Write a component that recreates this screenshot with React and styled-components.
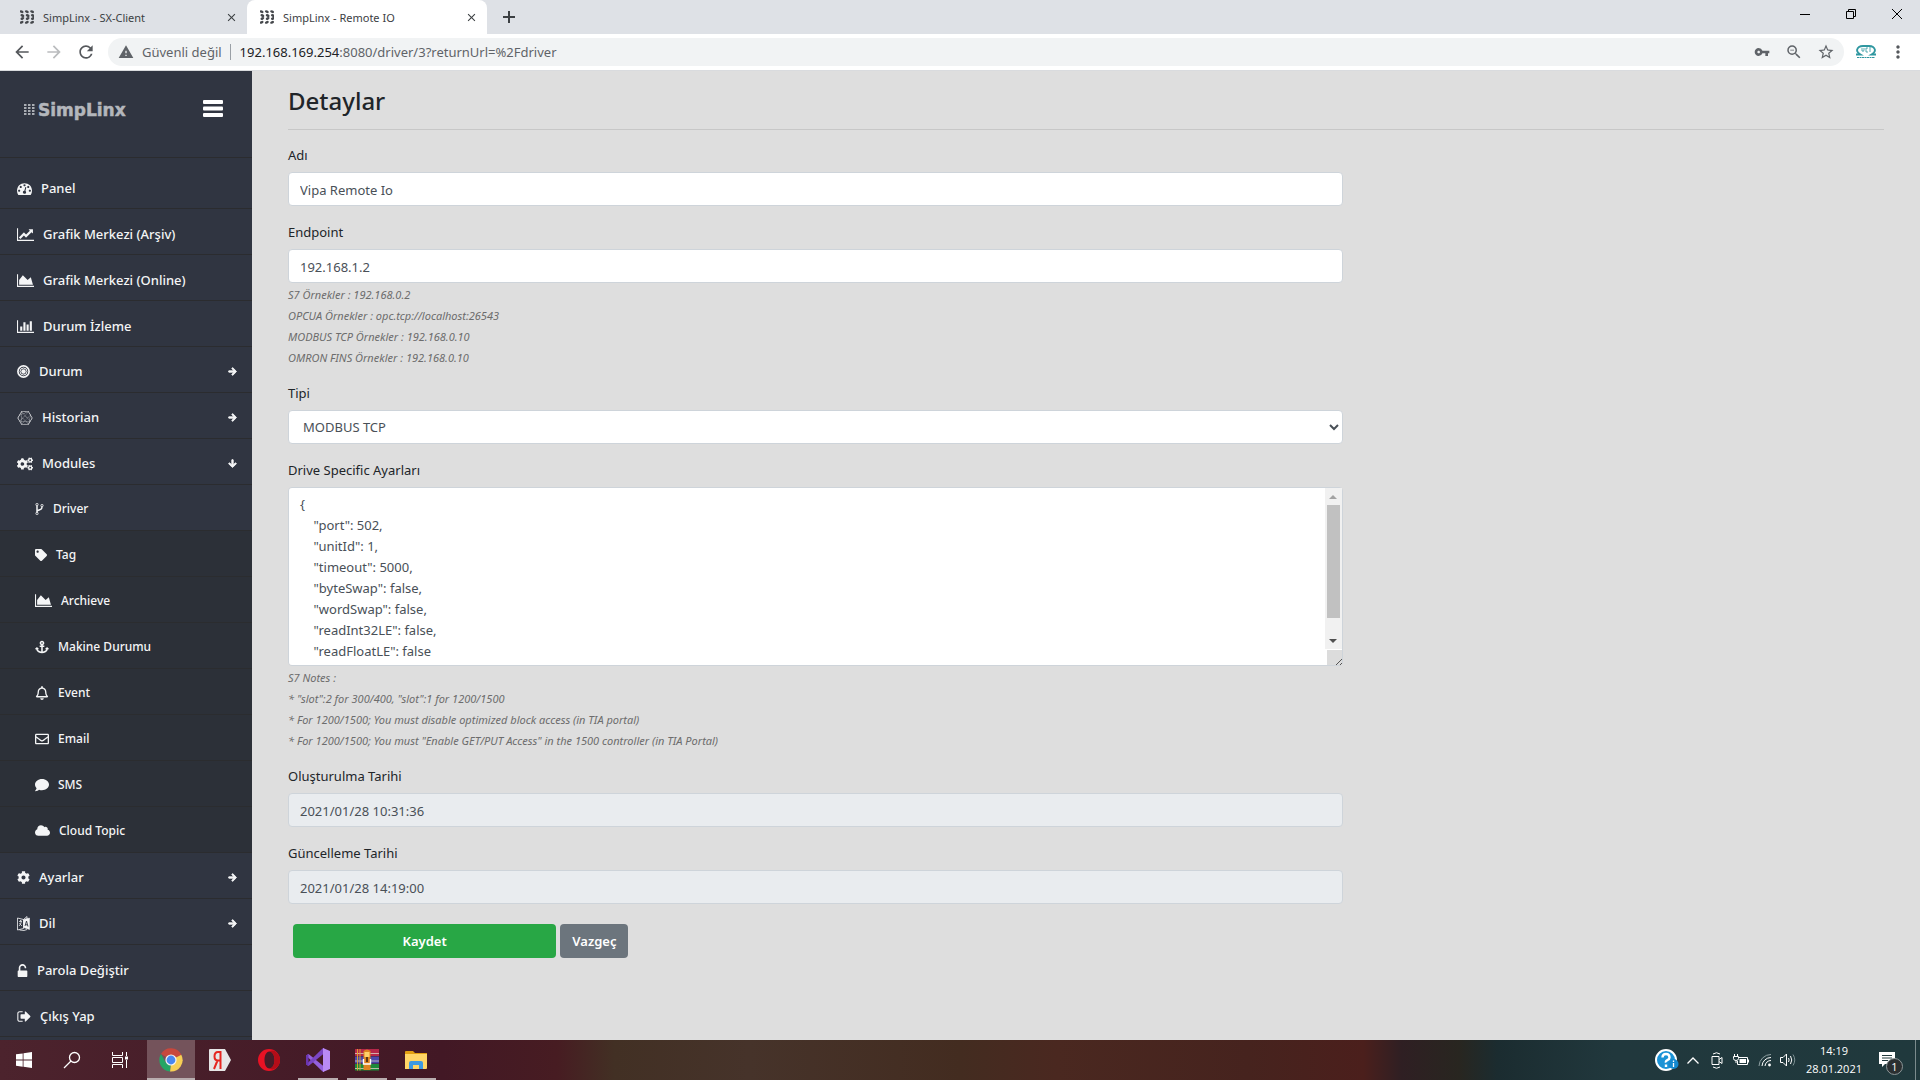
import React, { useState } from 'react'
import styled, { createGlobalStyle, css } from 'styled-components'
import {
  FaAnchor,
  FaArrowDown,
  FaArrowRight,
  FaCloud,
  FaCog,
  FaCogs,
  FaComment,
  FaConnectdevelop,
  FaRegBell,
  FaRegEnvelope,
  FaTag,
} from 'react-icons/fa'
import {
  MdArrowBack,
  MdArrowForward,
  MdClose,
  MdMoreVert,
  MdRefresh,
  MdStarBorder,
  MdVpnKey,
  MdWarning,
  MdZoomOut,
} from 'react-icons/md'

const GaugeIcon = () => (
  <svg width="15" height="15" viewBox="0 0 1792 1792" fill="currentColor">
    <path d="M384 1152q0-53-37.5-90.5t-90.5-37.5-90.5 37.5-37.5 90.5 37.5 90.5 90.5 37.5 90.5-37.5 37.5-90.5zm192-448q0-53-37.5-90.5t-90.5-37.5-90.5 37.5-37.5 90.5 37.5 90.5 90.5 37.5 90.5-37.5 37.5-90.5zm428 481l101-382q6-26-7.5-48.5t-38.5-29.5-48 6.5-30 39.5l-101 382q-60 5-107 43.5t-63 98.5q-20 77 20 146t117 89 146-20 89-117q16-60-6-117t-72-91zm660-33q0-53-37.5-90.5t-90.5-37.5-90.5 37.5-37.5 90.5 37.5 90.5 90.5 37.5 90.5-37.5 37.5-90.5zm-640-640q0-53-37.5-90.5t-90.5-37.5-90.5 37.5-37.5 90.5 37.5 90.5 90.5 37.5 90.5-37.5 37.5-90.5zm448 192q0-53-37.5-90.5t-90.5-37.5-90.5 37.5-37.5 90.5 37.5 90.5 90.5 37.5 90.5-37.5 37.5-90.5zm320 448q0 261-141 483-19 29-54 29h-1402q-35 0-54-29-141-221-141-483 0-182 71-348t191-286 286-191 348-71 348 71 286 191 191 286 71 348z" />
  </svg>
)

const ChartSvg = ({ d }) => (
  <svg width="17" height="15" viewBox="0 0 2048 1792" fill="currentColor">
    <path d={d} />
  </svg>
)

const LineChartIcon = () => (
  <ChartSvg d="M2048 1536v128h-2048v-1536h128v1408h1920zm-128-1248v435q0 21-19.5 29.5t-35.5-7.5l-121-121-633 633q-10 10-23 10t-23-10l-233-233-416 416-192-192 585-585q10-10 23-10t23 10l233 233 464-464-121-121q-16-16-7.5-35.5t29.5-19.5h435q14 0 23 9t9 23z" />
)

const AreaChartIcon = () => (
  <ChartSvg d="M2048 1536v128h-2048v-1536h128v1408h1920zm-384-1024l256 896h-1664v-576l448-576 576 576z" />
)

const BarChartIcon = () => (
  <ChartSvg d="M640 896v512h-256v-512h256zm384-512v1024h-256v-1024h256zm1024 1152v128h-2048v-1536h128v1408h1920zm-640-896v768h-256v-768h256zm384-384v1152h-256v-1152h256z" />
)

const BullseyeIcon = () => (
  <svg width="13" height="15" viewBox="0 0 26 30" fill="none" stroke="currentColor">
    <circle cx="13" cy="15" r="4.5" fill="currentColor" stroke="none" />
    <circle cx="13" cy="15" r="7" strokeWidth="2" />
    <circle cx="13" cy="15" r="11.2" strokeWidth="3.4" />
  </svg>
)

const ForkIcon = () => (
  <svg width="9" height="14" viewBox="384 0 1024 1792" fill="currentColor">
    <path d="M672 1472q0-40-28-68t-68-28-68 28-28 68 28 68 68 28 68-28 28-68zm0-1152q0-40-28-68t-68-28-68 28-28 68 28 68 68 28 68-28 28-68zm640 128q0-40-28-68t-68-28-68 28-28 68 28 68 68 28 68-28 28-68zm96 0q0 52-26 96.5t-70 69.5q-2 287-226 414-67 38-203 81-128 40-169.5 71t-41.5 100v26q44 25 70 69.5t26 96.5q0 80-56 136t-136 56-136-56-56-136q0-52 26-96.5t70-69.5v-820q-44-25-70-69.5t-26-96.5q0-80 56-136t136-56 136 56 56 136q0 52-26 96.5t-70 69.5v497q54-26 154-57 55-17 87.5-29.5t70.5-31 59-39.5 40.5-51 28-69.5 8.5-91.5q-44-25-70-69.5t-26-96.5q0-80 56-136t136-56 136 56 56 136z" />
  </svg>
)

const LanguageIcon = () => (
  <svg width="13" height="15" viewBox="0 0 26 30" fill="none" stroke="currentColor">
    <path d="M1 4 13 7V25L1 28zM13 7 20 1V6M5 28 14 29 20 27" strokeWidth="1.6" />
    <path d="M13 7 25 4V27L13 23z" fill="currentColor" />
    <path d="M4 11 10 10M7 8V11M9 10Q8 17 4 20M5 14Q7 18 10 20" strokeWidth="1.5" />
    <path d="M16 20 19 10 22 21M17 17 21 18" stroke="#303541" strokeWidth="1.8" />
  </svg>
)

const UnlockIcon = () => (
  <svg width="11" height="15" viewBox="0 0 1152 1792" fill="currentColor">
    <path d="M1056 896q40 0 68 28t28 68v576q0 40-28 68t-68 28h-960q-40 0-68-28t-28-68v-576q0-40 28-68t68-28h32v-320q0-185 131.5-316.5t316.5-131.5 316.5 131.5 131.5 316.5q0 26-19 45t-45 19h-64q-26 0-45-19t-19-45q0-106-75-181t-181-75-181 75-75 181v320h736z" />
  </svg>
)

const SignOutIcon = () => (
  <svg width="14" height="15" viewBox="0 0 1600 1792" fill="currentColor">
    <path d="M640 1440q0 4 1 20t.5 26.5-3 23.5-10 19.5-20.5 6.5h-320q-119 0-203.5-84.5t-84.5-203.5v-704q0-119 84.5-203.5t203.5-84.5h320q13 0 22.5 9.5t9.5 22.5q0 4 1 20t.5 26.5-3 23.5-10 19.5-20.5 6.5h-320q-66 0-113 47t-47 113v704q0 66 47 113t113 47h312l11.5 1 11.5 3 8 5.5 7 9 2 13.5zm928-544q0 26-19 45l-544 544q-19 19-45 19t-45-19-19-45v-288h-448q-26 0-45-19t-19-45v-384q0-26 19-45t45-19h448v-288q0-26 19-45t45-19 45 19l544 544q19 19 19 45z" />
  </svg>
)

// the columns of chevrons that the brand uses as its mark
const DotMark = ({ size, color }) => (
  <svg width={size} height={size} viewBox="0 0 16 16" fill={color}>
    {[0, 4, 8, 12].map((y, row) =>
      [0, 6, 12].map((x) => (
        <ellipse
          key={`${x}-${y}`}
          cx={x + 2 + (row === 1 || row === 2 ? 0.8 : -0.2)}
          cy={y + 2}
          rx="2.3"
          ry="1.5"
          transform={`rotate(${row < 2 ? 25 : -25} ${x + 2} ${y + 2})`}
        />
      )),
    )}
  </svg>
)

const BrandLogo = () => (
  <svg width="106" height="22" viewBox="0 0 106 22" aria-label="SimpLinx">
    <g fill="#a9adb3">
      {[1, 5, 9].map((x) =>
        [4, 7, 10, 13].map((y) => (
          <path key={`${x}-${y}`} d={`M${x} ${y}l2 0 1 1-1 1-2 0z`} />
        )),
      )}
    </g>
    <text
      x="15"
      y="16"
      fill="#b4b7bc"
      stroke="#b4b7bc"
      strokeWidth="0.5"
      fontFamily="DejaVu Sans, sans-serif"
      fontWeight="700"
      fontSize="17"
    >
      SimpLinx
    </text>
  </svg>
)

const mainItems = [
  { label: 'Panel', icon: <GaugeIcon /> },
  { label: 'Grafik Merkezi (Arşiv)', icon: <LineChartIcon /> },
  { label: 'Grafik Merkezi (Online)', icon: <AreaChartIcon /> },
  { label: 'Durum İzleme', icon: <BarChartIcon /> },
  { label: 'Durum', icon: <BullseyeIcon />, arrow: 'right' },
  { label: 'Historian', icon: <FaConnectdevelop size={16} />, arrow: 'right' },
  { label: 'Modules', icon: <FaCogs size={16} />, arrow: 'down' },
]

const moduleItems = [
  { label: 'Driver', icon: <ForkIcon />, active: true },
  { label: 'Tag', icon: <FaTag size={12} /> },
  { label: 'Archieve', icon: <AreaChartIcon /> },
  { label: 'Makine Durumu', icon: <FaAnchor size={14} /> },
  { label: 'Event', icon: <FaRegBell size={14} /> },
  { label: 'Email', icon: <FaRegEnvelope size={14} /> },
  { label: 'SMS', icon: <FaComment size={14} /> },
  { label: 'Cloud Topic', icon: <FaCloud size={15} /> },
]

const bottomItems = [
  { label: 'Ayarlar', icon: <FaCog size={13} />, arrow: 'right' },
  { label: 'Dil', icon: <LanguageIcon />, arrow: 'right' },
  { label: 'Parola Değiştir', icon: <UnlockIcon /> },
  { label: 'Çıkış Yap', icon: <SignOutIcon /> },
]

const driverSettings = `{
    "port": 502,
    "unitId": 1,
    "timeout": 5000,
    "byteSwap": false,
    "wordSwap": false,
    "readInt32LE": false,
    "readFloatLE": false
}`

const Browser = () => (
  <header>
    <TabStrip>
      <Tab>
        <DotMark size={14} color="#45484c" />
        <TabTitle>SimpLinx - SX-Client</TabTitle>
        <TabClose aria-label="Close tab">
          <MdClose size={13} />
        </TabClose>
      </Tab>
      <Tab $active>
        <DotMark size={14} color="#45484c" />
        <TabTitle>SimpLinx - Remote IO</TabTitle>
        <TabClose aria-label="Close tab">
          <MdClose size={13} />
        </TabClose>
      </Tab>
      <NewTab aria-label="New tab">
        <svg width="14" height="14" viewBox="0 0 14 14" stroke="#3c4043" strokeWidth="2">
          <path d="M7 1v12M1 7h12" />
        </svg>
      </NewTab>
      <WindowButtons>
        <WindowButton aria-label="Minimize">
          <svg width="10" height="10" stroke="#000">
            <path d="M0 5.5h10" />
          </svg>
        </WindowButton>
        <WindowButton aria-label="Restore">
          <svg width="10" height="10" stroke="#000" fill="none">
            <path d="M.5 2.5h7v7h-7zM2.5 2.5v-2h7v7h-2" />
          </svg>
        </WindowButton>
        <WindowButton aria-label="Close">
          <svg width="10" height="10" stroke="#000">
            <path d="M0 0l10 10M10 0l-10 10" />
          </svg>
        </WindowButton>
      </WindowButtons>
    </TabStrip>
    <Toolbar>
      <ToolButton aria-label="Back">
        <MdArrowBack size={20} />
      </ToolButton>
      <ToolButton aria-label="Forward" disabled>
        <MdArrowForward size={20} />
      </ToolButton>
      <ToolButton aria-label="Reload">
        <MdRefresh size={20} />
      </ToolButton>
      <AddressBar>
        <MdWarning size={16} />
        <Security>Güvenli değil</Security>
        <Url>
          <b>192.168.169.254</b>:8080/driver/3?returnUrl=%2Fdriver
        </Url>
        <AddressButton aria-label="Passwords">
          <MdVpnKey size={16} />
        </AddressButton>
        <AddressButton aria-label="Zoom">
          <MdZoomOut size={18} />
        </AddressButton>
        <AddressButton aria-label="Bookmark">
          <MdStarBorder size={18} />
        </AddressButton>
      </AddressBar>
      <Extension aria-label="Extension">
        <svg width="22" height="14" viewBox="0 0 22 14" fill="none" stroke="#2f97a0">
          <path
            d="M1 9.5h4.5Q2 7.5 2 5Q3 1 8 1H14Q19 1 20 5Q20 7.5 16.5 9.5H21"
            strokeWidth="1.8"
          />
          <path d="M7 3v3q2 1 2-1V3M13 3h-2v4h2M15 2v5" strokeWidth="0.8" />
          <path d="M2 12.5h18" strokeDasharray="2 0.5" />
        </svg>
      </Extension>
      <ToolButton aria-label="Menu">
        <MdMoreVert size={20} />
      </ToolButton>
    </Toolbar>
  </header>
)

const MenuItem = ({ item, sub, first }) => (
  <MenuRow $sub={sub} $active={item.active} $first={first}>
    <MenuLink href="#" $sub={sub} $group={item.arrow}>
      {item.icon}
      <MenuLabel>{item.label}</MenuLabel>
      {item.arrow === 'right' && <FaArrowRight size={9} strokeWidth={50} />}
      {item.arrow === 'down' && <FaArrowDown size={9} strokeWidth={50} />}
    </MenuLink>
  </MenuRow>
)

const SideMenu = () => (
  <Sidebar>
    <SidebarHeader>
      <BrandLogo />
      <MenuToggle aria-label="Menu">
        <svg width="20" height="17" viewBox="0 0 20 17" fill="#fff">
          <rect width="20" height="4" rx="1" />
          <rect y="6.5" width="20" height="4" rx="1" />
          <rect y="13" width="20" height="4" rx="1" />
        </svg>
      </MenuToggle>
    </SidebarHeader>
    <Menu>
      {mainItems.map((item, i) => (
        <MenuItem key={item.label} item={item} first={i === 0} />
      ))}
      {moduleItems.map((item) => (
        <MenuItem key={item.label} item={item} sub />
      ))}
      {bottomItems.map((item) => (
        <MenuItem key={item.label} item={item} />
      ))}
    </Menu>
  </Sidebar>
)

const DriverForm = () => {
  const [name, setName] = useState('Vipa Remote Io')
  const [endpoint, setEndpoint] = useState('192.168.1.2')
  const [type, setType] = useState('MODBUS TCP')
  const [settings, setSettings] = useState(driverSettings)

  return (
    <Form onSubmit={(e) => e.preventDefault()}>
      <Group>
        <Label htmlFor="name">Adı</Label>
        <Input id="name" value={name} onChange={(e) => setName(e.target.value)} />
      </Group>
      <Group $withHelp>
        <Label htmlFor="endpoint">Endpoint</Label>
        <Input
          id="endpoint"
          value={endpoint}
          onChange={(e) => setEndpoint(e.target.value)}
        />
        <Help>
          <li>S7 Örnekler : 192.168.0.2</li>
          <li>OPCUA Örnekler : opc.tcp://localhost:26543</li>
          <li>MODBUS TCP Örnekler : 192.168.0.10</li>
          <li>OMRON FINS Örnekler : 192.168.0.10</li>
        </Help>
      </Group>
      <Group>
        <Label htmlFor="type">Tipi</Label>
        <Select id="type" value={type} onChange={(e) => setType(e.target.value)}>
          <option>MODBUS TCP</option>
        </Select>
      </Group>
      <Group $withHelp>
        <Label htmlFor="settings">Drive Specific Ayarları</Label>
        <TextAreaFrame>
          <TextArea
            id="settings"
            value={settings}
            spellCheck={false}
            onChange={(e) => setSettings(e.target.value)}
          />
          <ScrollBar>
            <ScrollArrow>
              <svg width="8" height="4" fill="#a3a3a3">
                <path d="M4 0l4 4H0z" />
              </svg>
            </ScrollArrow>
            <ScrollTrack>
              <ScrollThumb />
            </ScrollTrack>
            <ScrollArrow>
              <svg width="8" height="4" fill="#505050">
                <path d="M0 0h8l-4 4z" />
              </svg>
            </ScrollArrow>
          </ScrollBar>
        </TextAreaFrame>
        <Help>
          <li>S7 Notes :</li>
          <li>* "slot":2 for 300/400, "slot":1 for 1200/1500</li>
          <li>* For 1200/1500; You must disable optimized block access (in TIA portal)</li>
          <li>
            * For 1200/1500; You must "Enable GET/PUT Access" in the 1500 controller (in TIA
            Portal)
          </li>
        </Help>
      </Group>
      <Group>
        <Label htmlFor="created">Oluşturulma Tarihi</Label>
        <Input id="created" value="2021/01/28 10:31:36" readOnly />
      </Group>
      <Group>
        <Label htmlFor="updated">Güncelleme Tarihi</Label>
        <Input id="updated" value="2021/01/28 14:19:00" readOnly />
      </Group>
      <Actions>
        <SaveButton type="submit">Kaydet</SaveButton>
        <CancelButton type="button">Vazgeç</CancelButton>
      </Actions>
    </Form>
  )
}

const WindowsIcon = () => (
  <svg width="16" height="16" viewBox="0 0 16 16" fill="#fff">
    <path d="M0 2.3 6.7 1.4V7.6H0zM7.5 1.3 16 0V7.6H7.5zM0 8.4H6.7V14.7L0 13.7zM7.5 8.4H16V16L7.5 14.8z" />
  </svg>
)

const SearchIcon = () => (
  <svg width="18" height="18" viewBox="0 0 18 18" fill="none" stroke="#fff" strokeWidth="1.3">
    <circle cx="11.5" cy="6.5" r="5" />
    <path d="M8 10 1 17" />
  </svg>
)

const TaskViewIcon = () => (
  <svg width="18" height="16" viewBox="0 0 18 16" fill="none" stroke="#fff">
    <path d="M1.5 0v3.5h10V0M1.5 16v-3.5h10V16M1.5 5.5h10v5h-10zM15.5 0v4M15.5 8v8" />
    <path d="M14 4.5h3v3h-3z" fill="#fff" stroke="none" />
  </svg>
)

const ChromeIcon = () => (
  <svg width="24" height="24" viewBox="0 0 24 24">
    <path d="M12 12 2 6A11.5 11.5 0 0 1 22.3 6.8z" fill="#c8483d" />
    <path d="M12 12H12L22.3 6.8A11.5 11.5 0 0 1 11 23.5z" fill="#f7cf55" />
    <path d="M12 12 11 23.5A11.5 11.5 0 0 1 2 6L7 15z" fill="#25a565" />
    <circle cx="12" cy="12" r="5.6" fill="#f3f3f3" />
    <circle cx="12" cy="12" r="4.4" fill="#4a87f0" />
  </svg>
)

const YandexIcon = () => (
  <svg width="24" height="24" viewBox="0 0 24 24">
    <path d="M2 1H17L23 12 17 23H2Q1 23 1 22V2Q1 1 2 1z" fill="#e6e6e6" />
    <path
      d="M12.5 21V4H10Q6.5 4 6.5 8.5Q6.5 12.5 10 12.5H12.5M9.5 12.5 6 21"
      fill="none"
      stroke="#e52620"
      strokeWidth="2"
    />
  </svg>
)

const OperaIcon = () => (
  <svg width="24" height="24" viewBox="0 0 24 24">
    <path
      d="M12 1A11 11 0 0 0 12 23A11 11 0 0 0 12 1zM12.5 3.5C16 3.5 17.5 8 17.5 12S16 20.5 12.5 20.5S7.5 16 7.5 12S9 3.5 12.5 3.5z"
      fill="#e81224"
      fillRule="evenodd"
    />
    <path
      d="M12.5 3.5Q16 1.5 19 4Q23 7 23 12T19 20Q16 22.5 12.5 20.5Q17.5 19 17.5 12T12.5 3.5z"
      fill="#b30d18"
    />
  </svg>
)

const VisualStudioIcon = () => (
  <svg width="24" height="24" viewBox="0 0 24 24">
    <path d="M0 7.5 2.5 6 18 18.5V24L16.5 23.5z" fill="#9460dd" />
    <path d="M0 16.5 2.5 18 18 5.5V0L16.5 .5z" fill="#7b46c4" />
    <path d="M0 7.5 2.5 6V18L0 16.5z" fill="#6a35b1" />
    <path d="M17 0 24 3V21L17 24z" fill="#b98af5" />
  </svg>
)

const WinrarIcon = () => (
  <svg width="24" height="24" viewBox="0 0 24 24">
    <path d="M0 1H24V8H0z" fill="#b5274a" />
    <path d="M0 8.5H24V15.5H0z" fill="#4a48ac" />
    <path d="M0 16H24V22.5H0z" fill="#1e8a3b" />
    <path d="M0 5.5H24M0 13H24M0 20.5H24" stroke="#d9cfc4" strokeWidth="0.8" />
    <path d="M2.5 1V22.5M5 1V22.5" stroke="#e0a62c" strokeWidth="0.9" />
    <path d="M8.5 3Q12 0 15.5 3V22H8.5z" fill="#de8420" />
    <path d="M9.5 4h5v5h-5z" fill="#ffd06a" />
    <path d="M8.5 11v5h7v-5" fill="none" stroke="#fff" strokeWidth="1.4" />
    <path d="M12 9V14" stroke="#593516" strokeWidth="2" />
  </svg>
)

const ExplorerIcon = () => (
  <svg width="22" height="20" viewBox="0 0 22 20">
    <path d="M0 2Q0 1 1 1H8L10 3H22V8H0z" fill="#e2a012" />
    <path d="M0 4H22V18Q22 19 21 19H0z" fill="#ffd667" />
    <path d="M4 19V13Q4 11 6 11H16Q18 11 18 13V19H14V15H8V19z" fill="#3d9ae2" />
  </svg>
)

const taskApps = [
  { name: 'Chrome', icon: <ChromeIcon />, active: true },
  { name: 'Yandex', icon: <YandexIcon /> },
  { name: 'Opera', icon: <OperaIcon /> },
  { name: 'Visual Studio', icon: <VisualStudioIcon />, open: true },
  { name: 'WinRAR', icon: <WinrarIcon />, open: true },
  { name: 'File Explorer', icon: <ExplorerIcon />, open: true },
]

const Taskbar = () => (
  <TaskbarWrapper>
    <SystemButtons>
      <TaskButton aria-label="Start">
        <WindowsIcon />
      </TaskButton>
      <TaskButton aria-label="Search">
        <SearchIcon />
      </TaskButton>
      <TaskButton aria-label="Task view">
        <TaskViewIcon />
      </TaskButton>
    </SystemButtons>
    <AppButtons>
      {taskApps.map((app) => (
        <TaskButton
          key={app.name}
          aria-label={app.name}
          $active={app.active}
          $open={app.open}
        >
          {app.icon}
        </TaskButton>
      ))}
    </AppButtons>
    <Tray>
      <TrayButton aria-label="Help">
        <svg width="24" height="24" viewBox="0 0 24 24">
          <circle cx="11" cy="12" r="10" fill="#1b93d6" stroke="#fff" strokeWidth="2" />
          <path
            d="M7.5 9.5Q7.5 6 11 6T14.5 9.5Q14.5 11 12.5 12T11 14.500M11 16.500V19"
            fill="none"
            stroke="#fff"
            strokeWidth="2.4"
          />
          <circle cx="18.5" cy="16" r="5" fill="#1489cf" />
          <path d="M18.5 15V19M18.5 12.5V14" stroke="#fff" strokeWidth="1.3" />
        </svg>
      </TrayButton>
      <TrayButton aria-label="Show hidden icons">
        <svg width="12" height="7" fill="none" stroke="#fff" strokeWidth="1.3">
          <path d="M.5 6.5 6 1l5.5 5.5" />
        </svg>
      </TrayButton>
      <TrayButton aria-label="Camera">
        <svg width="12" height="17" viewBox="0 0 12 17" fill="none" stroke="#fff">
          <path d="M1 4.5h7v8H1zM8 7.5 11 5.5v6L8 9.5M2 2Q5.5-.5 9 2M2 15Q5.5 17.5 9 15" />
        </svg>
      </TrayButton>
      <TrayButton aria-label="Battery">
        <svg width="16" height="13" viewBox="0 0 16 13" fill="none" stroke="#fff">
          <path d="M5.5 3.5H14.5V10.5H4.5V7M15.5 5.5v3M1.5 0v2.5M4.5 0v2.5M.5 2.5h5v2q0 2-2.5 2t-2.5-2zM3 6.5V9" />
          <path d="M6.5 5h6.5v4H6.5z" fill="#fff" stroke="none" />
        </svg>
      </TrayButton>
      <TrayButton aria-label="Network">
        <svg width="14" height="14" viewBox="0 0 14 14" fill="none" stroke="#fff">
          <path d="M1 13A12 12 0 0 1 13 1.5" stroke="#8fa0a3" />
          <path d="M4 13A9 9 0 0 1 13 4.5M7 13A6 6 0 0 1 13 7.5" />
          <circle cx="11.5" cy="12" r="1.4" fill="#fff" stroke="none" />
        </svg>
      </TrayButton>
      <TrayButton aria-label="Volume">
        <svg width="17" height="14" viewBox="0 0 17 14" fill="none" stroke="#fff">
          <path d="M.5 4.5h2.5l3.5-3.5v12L3 9.5H.5zM8.5 5q1.2 2 0 4M10.5 3q2.5 4 0 8" />
          <path d="M13 1.5q3.5 5.5 0 11" stroke="#7d9093" />
        </svg>
      </TrayButton>
      <Clock>
        <time>14:19</time>
        <time>28.01.2021</time>
      </Clock>
      <TrayButton aria-label="Notifications">
        <NoticeIcon>
          <svg width="16" height="16" viewBox="0 0 16 16">
            <path d="M0 0H16V12H6L3 15V12H0z" fill="#fff" />
            <path d="M3 3.5H13M3 6H13M3 8.5H9" stroke="#223a3d" />
          </svg>
          <Badge>1</Badge>
        </NoticeIcon>
      </TrayButton>
      <ShowDesktop aria-label="Show desktop" />
    </Tray>
  </TaskbarWrapper>
)

const App = () => (
  <Screen>
    <GlobalStyle />
    <Browser />
    <Page>
      <SideMenu />
      <Content>
        <Title>Detaylar</Title>
        <DriverForm />
      </Content>
    </Page>
    <Taskbar />
  </Screen>
)

export default App

const GlobalStyle = createGlobalStyle`
  * {
    box-sizing: border-box;
  }

  body {
    margin: 0;
    font-family: 'Noto Sans', 'Open Sans', sans-serif;
    font-size: 13px;
    line-height: 21px;
    color: #212529;
  }

  button,
  input,
  select,
  textarea {
    margin: 0;
    font-family: inherit;
  }

  button {
    padding: 0;
    border: none;
    background: none;
    color: inherit;
  }

  svg {
    display: block;
    flex-shrink: 0;
  }
`

const Screen = styled.div`
  display: flex;
  flex-direction: column;
  height: 100vh;
`

const TabStrip = styled.div`
  display: flex;
  height: 34px;
  padding-left: 7px;
  background: #dee1e6;
`

const Tab = styled.div`
  display: flex;
  align-items: center;
  width: 240px;
  padding: 0 9px 0 13px;
  border-radius: 8px 8px 0 0;
  background: ${(props) => (props.$active ? 'white' : 'none')};
  color: #3c4043;
  font-size: 11px;
`

const TabTitle = styled.span`
  flex: 1;
  padding-left: 9px;
`

const TabClose = styled.button`
  color: #3c4043;
`

const NewTab = styled.button`
  margin-left: 15px;
`

const WindowButtons = styled.div`
  display: flex;
  margin-left: auto;
`

const WindowButton = styled.button`
  display: grid;
  place-items: center;
  width: 46px;
  height: 28px;
`

const Toolbar = styled.div`
  display: flex;
  align-items: center;
  height: 37px;
  padding: 0 6px;
  background: white;
  border-bottom: 1px solid #d9dbde;
`

const ToolButton = styled.button`
  display: grid;
  place-items: center;
  width: 32px;
  height: 32px;
  color: ${(props) => (props.disabled ? '#babcbe' : '#55585c')};
`

const AddressBar = styled.div`
  display: flex;
  flex: 1;
  align-items: center;
  height: 28px;
  margin-left: 6px;
  padding: 0 2px 0 10px;
  border-radius: 14px;
  background: #f1f3f4;
  color: #5f6368;
`

const Security = styled.span`
  margin: 0 9px 0 8px;
  padding-right: 8px;
  border-right: 1px solid #9aa0a6;
  line-height: 16px;
`

const Url = styled.span`
  flex: 1;

  & > b {
    color: #202124;
    font-weight: 400;
  }
`

const AddressButton = styled.button`
  display: grid;
  place-items: center;
  width: 32px;
`

const Extension = styled.button`
  padding: 0 5px 0 11px;
`

const Page = styled.div`
  display: flex;
  flex: 1;
  min-height: 0;
  overflow: hidden;
`

const Sidebar = styled.nav`
  flex: 0 0 252px;
  background: #303541;
  color: #f4f5f6;
`

const SidebarHeader = styled.div`
  display: flex;
  justify-content: space-between;
  height: 87px;
  padding: 29px 29px 0 23px;
  border-bottom: 1px solid #2b2c2f;
`

const MenuToggle = styled.button`
  height: 17px;
`

const Menu = styled.ul`
  margin: 0;
  padding: 0;
  list-style: none;
`

const MenuRow = styled.li`
  padding-top: ${(props) => (props.$first ? '5px' : '0')};
  border-bottom: 1px solid #2b2c2f;
  background: ${(props) => (props.$sub && !props.$active ? '#2c3038' : 'none')};
`

const MenuLink = styled.a`
  display: flex;
  align-items: center;
  height: 45px;
  padding: ${(props) => (props.$group ? '4px' : '6px')} 15px 0 17px;
  color: inherit;
  font-size: 13px;
  font-weight: 500;
  text-decoration: none;

  ${(props) =>
    props.$sub &&
    css`
      padding: 2px 15px 0 35px;
      font-size: 12px;
    `}
`

const MenuLabel = styled.span`
  flex: 1;
  padding-left: 9px;

  & + svg {
    stroke: currentColor;
  }
`

const Content = styled.main`
  flex: 1;
  padding: 14px 36px;
  background: #dedede;
`

const Title = styled.h4`
  margin: 0 0 15px;
  padding-bottom: 12px;
  border-bottom: 1px solid #c7c7c7;
  font-size: 24px;
  font-weight: 500;
  line-height: 32px;
`

const Form = styled.form`
  width: 66.1%;
`

const Group = styled.div`
  display: flex;
  flex-direction: column;
  margin-bottom: ${(props) => (props.$withHelp ? '15px' : '16px')};
`

const Label = styled.label`
  margin-bottom: 6px;
`

const control = css`
  width: 100%;
  border: 1px solid #ced4da;
  border-radius: 4px;
  background: white;
  color: #495057;
  font-size: 13px;
  line-height: 21px;
  outline: none;
`

const Input = styled.input`
  ${control}
  height: 34px;
  padding: 2px 11px 0;

  &:read-only {
    background: #e9ecef;
  }
`

const Select = styled.select`
  ${control}
  height: 34px;
  padding: 0 0 0 10px;
`

const TextAreaFrame = styled.div`
  position: relative;
  display: flex;
`

const TextArea = styled.textarea`
  ${control}
  height: 179px;
  padding: 6px 11px 5px;
  resize: vertical;

  &::-webkit-scrollbar {
    width: 17px;
    background: #f1f1f1;
  }

  &::-webkit-resizer {
    background: #dcdcdc
      url("data:image/svg+xml,%3Csvg xmlns='http://www.w3.org/2000/svg' width='17' height='17'%3E%3Cpath d='M8 16l8-8M12 16l4-4' stroke='%23555'/%3E%3C/svg%3E")
      no-repeat;
  }
`

// lies over the right edge of the text area, above its resize corner
const ScrollBar = styled.div`
  position: absolute;
  top: 1px;
  right: 1px;
  bottom: 17px;
  display: flex;
  flex-direction: column;
  width: 17px;
  background: #f1f1f1;
`

const ScrollArrow = styled.span`
  display: grid;
  place-items: center;
  height: 17px;
`

const ScrollTrack = styled.div`
  flex: 1;
  padding: 0 2px;
`

const ScrollThumb = styled.div`
  height: 89%;
  background: #c1c1c1;
`

const Help = styled.ul`
  margin: 1px 0 0;
  padding: 0;
  list-style: none;
  color: #6c6c6c;
  font-size: 11px;
  font-style: italic;
`

const Actions = styled.div`
  display: flex;
  gap: 4px;
  padding: 4px 5px;
`

const Button = styled.button`
  height: 34px;
  border-radius: 4px;
  color: white;
  font-size: 13px;
  font-weight: 600;
`

const SaveButton = styled(Button)`
  width: 25.2%;
  background: #28a745;
`

const CancelButton = styled(Button)`
  padding: 0 12px;
  background: #6c757d;
`

const TaskbarWrapper = styled.footer`
  display: flex;
  height: 40px;
  background: linear-gradient(
    90deg,
    #4c232d 0%,
    #421825 23%,
    #471c22 29%,
    #423024 32%,
    #46332a 39%,
    #432c20 50%,
    #4a2820 55%,
    #46231e 65%,
    #4b1f1c 71%,
    #2f1f23 73%,
    #282620 76%,
    #1b2c30 78%,
    #21383d 84%,
    #20393d 100%
  );
  color: white;
  font-family: 'Open Sans', sans-serif;
`

const SystemButtons = styled.div`
  display: flex;
`

const AppButtons = styled.div`
  display: flex;
  gap: 1px;
  margin-left: 3px;
`

const TaskButton = styled.button`
  display: grid;
  place-items: center;
  width: 48px;
  background: ${(props) => (props.$active ? '#74535b' : 'none')};
  box-shadow: ${(props) => (props.$active ? 'inset 0 -2px #b9adaf' : 'none')};

  ${(props) =>
    props.$open &&
    css`
      background: linear-gradient(#b9adaf, #b9adaf) bottom / 40px 2px no-repeat;
    `}
`

const Tray = styled.div`
  display: flex;
  align-items: center;
  margin-left: auto;
`

const TrayButton = styled.button`
  display: grid;
  place-items: center;
  min-width: 24px;
  height: 40px;
  padding: 0 2px;
`

const Clock = styled.div`
  display: flex;
  flex-direction: column;
  align-items: center;
  padding: 0 11px 0 5px;
  font-size: 11px;
  line-height: 18px;
`

const NoticeIcon = styled.span`
  position: relative;
  display: block;
  margin: 0 18px 0 4px;
`

const Badge = styled.span`
  position: absolute;
  top: 6px;
  left: 7px;
  width: 17px;
  height: 17px;
  border: 1px solid #8c9698;
  border-radius: 50%;
  background: #2b2f31;
  font-size: 11px;
  line-height: 15px;
  text-align: center;
`

const ShowDesktop = styled.button`
  width: 5px;
  height: 40px;
  border-left: 1px solid #7b8b8d;
`
